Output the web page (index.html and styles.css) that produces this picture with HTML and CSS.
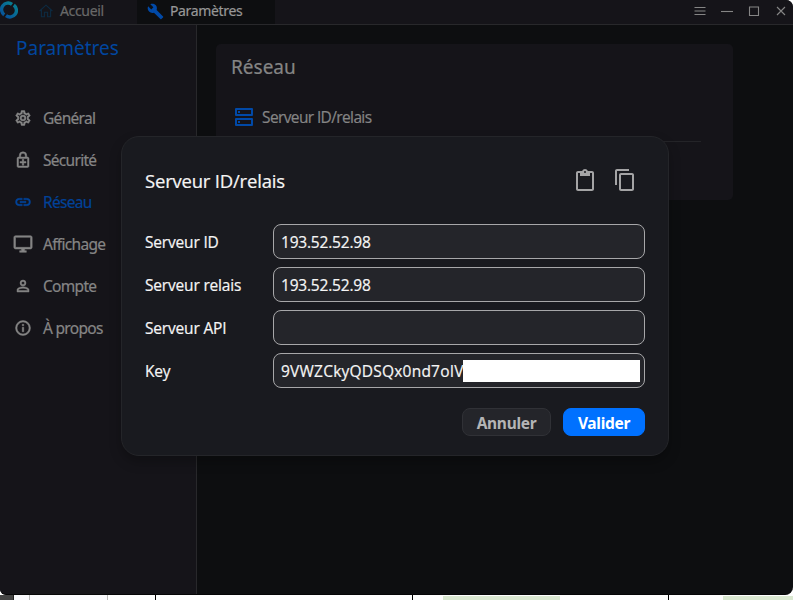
FILE: index.html
```html
<!DOCTYPE html>
<html lang="fr">
<head>
<meta charset="utf-8">
<title>Paramètres</title>
<link rel="stylesheet" href="styles.css">
</head>
<body>
<div class="window">
  <header class="titlebar">
    <svg class="logo" viewBox="0 0 18 18"><defs><linearGradient id="lg" x1="0" y1="1" x2="1" y2="0"><stop offset="0" stop-color="#075299"/><stop offset="1" stop-color="#087f91"/></linearGradient></defs><g fill="none" stroke="url(#lg)" stroke-width="3.4"><path d="M4.2 13.8A6.4 6.4 0 0 1 12 3.3"/><path d="M13.8 4.2A6.4 6.4 0 0 1 6 14.7"/></g></svg>
    <div class="tab home"><svg viewBox="0 0 14 14" fill="none" stroke="#0d2b42" stroke-width="1.1"><path d="M.6 7 7 1.2 13.4 7M2.4 5.8v7h3V8.3h3.2v4.5h3v-7"/></svg><span>Accueil</span></div>
    <div class="tab active"><svg viewBox="0 0 24 24" fill="#0149a7"><path d="m22.7 19-9.1-9.1c.9-2.3.4-5-1.5-6.9-2-2-5-2.4-7.4-1.3L9 6 6 9 1.6 4.7C.4 7.1.9 10.1 2.9 12.1c1.9 1.9 4.6 2.4 6.9 1.5l9.1 9.1c.4.4 1 .4 1.4 0l2.3-2.3c.5-.4.5-1.1.1-1.4z"/></svg><span>Paramètres</span></div>
    <div class="controls">
      <svg viewBox="0 0 12 12"><path d="M.5 2.5h11M.5 6h11M.5 9.5h11"/></svg>
      <svg viewBox="0 0 12 12"><path d="M0 6.5h12"/></svg>
      <svg viewBox="0 0 12 12"><path d="M1.5 2h9v8.5h-9z"/></svg>
      <svg viewBox="0 0 12 12"><path d="m2 2 8 8m0-8-8 8"/></svg>
    </div>
  </header>
  <div class="body">
    <nav class="sidebar">
      <h1>Paramètres</h1>
      <ul>
        <li><svg viewBox="0 0 24 24"><path fill-rule="evenodd" d="M19.43 12.98c.04-.32.07-.64.07-.98s-.03-.66-.07-.98l2.11-1.65c.19-.15.24-.42.12-.64l-2-3.46c-.12-.22-.39-.3-.61-.22l-2.49 1c-.52-.4-1.08-.73-1.69-.98l-.38-2.65C14.46 2.18 14.25 2 14 2h-4c-.25 0-.46.18-.49.42l-.38 2.65c-.61.25-1.17.59-1.69.98l-2.49-1c-.23-.09-.49 0-.61.22l-2 3.46c-.13.22-.07.49.12.64l2.11 1.65c-.04.32-.07.65-.07.98s.03.66.07.98l-2.11 1.65c-.19.15-.24.42-.12.64l2 3.46c.12.22.39.3.61.22l2.49-1c.52.4 1.08.73 1.69.98l.38 2.65c.03.24.24.42.49.42h4c.25 0 .46-.18.49-.42l.38-2.65c.61-.25 1.17-.59 1.69-.98l2.49 1c.23.09.49 0 .61-.22l2-3.46c.12-.22.07-.49-.12-.64l-2.11-1.65zm-1.98-1.71c.04.31.05.52.05.73s-.02.43-.05.73l-.14 1.13.89.7 1.08.84-.7 1.21-1.27-.51-1.04-.42-.9.68c-.43.32-.84.56-1.25.73l-1.06.43-.16 1.13-.2 1.35h-1.4l-.19-1.35-.16-1.13-1.06-.43c-.43-.18-.83-.41-1.23-.71l-.91-.7-1.06.43-1.27.51-.7-1.21 1.08-.84.89-.7-.14-1.13c-.03-.31-.05-.54-.05-.74s.02-.43.05-.73l.14-1.13-.89-.7-1.08-.84.7-1.21 1.27.51 1.04.42.9-.68c.43-.32.84-.56 1.25-.73l1.06-.43.16-1.13.2-1.35h1.39l.19 1.35.16 1.13 1.06.43c.43.18.83.41 1.23.71l.91.7 1.06-.43 1.27-.51.7 1.21-1.07.85-.89.7.14 1.13zM12 8a4 4 0 1 0 0 8 4 4 0 0 0 0-8zm0 6a2 2 0 1 1 0-4 2 2 0 0 1 0 4z"/></svg>Général</li>
        <li><svg viewBox="0 0 24 24"><path fill-rule="evenodd" d="M18 8h-1V6A5 5 0 0 0 7 6v2H6c-1.1 0-2 .9-2 2v10c0 1.1.9 2 2 2h12c1.1 0 2-.9 2-2V10c0-1.1-.9-2-2-2zM9 6a3 3 0 1 1 6 0v2H9V6zm9 14H6V10h12v10zm-7-1h2v-3h3v-2h-3v-3h-2v3H8v2h3z"/></svg>Sécurité</li>
        <li class="selected"><svg viewBox="0 0 24 24"><path d="M3.9 12c0-1.71 1.39-3.1 3.1-3.1h4V7H7a5 5 0 0 0 0 10h4v-1.9H7A3.1 3.1 0 0 1 3.9 12zM8 13h8v-2H8v2zm9-6h-4v1.9h4a3.1 3.1 0 0 1 0 6.2h-4V17h4a5 5 0 0 0 0-10z"/></svg>Réseau</li>
        <li><svg class="wide" viewBox="0 0 24 24"><path d="M21 2H3c-1.1 0-2 .9-2 2v12c0 1.1.9 2 2 2h7v2H8v2h8v-2h-2v-2h7c1.1 0 2-.9 2-2V4c0-1.1-.9-2-2-2zm0 14H3V4h18v12z"/></svg>Affichage</li>
        <li><svg viewBox="0 0 24 24"><path d="M12 5.9a2.1 2.1 0 1 1 0 4.2 2.1 2.1 0 0 1 0-4.2m0 9c2.97 0 6.1 1.46 6.1 2.1v1.1H5.9V17c0-.64 3.13-2.1 6.1-2.1M12 4a4 4 0 1 0 0 8 4 4 0 0 0 0-8zm0 9c-2.67 0-8 1.34-8 4v3h16v-3c0-2.66-5.33-4-8-4z"/></svg>Compte</li>
        <li><svg viewBox="0 0 24 24"><path d="M11 7h2v2h-2zm0 4h2v6h-2zm1-9a10 10 0 1 0 0 20 10 10 0 0 0 0-20zm0 18a8 8 0 1 1 0-16 8 8 0 0 1 0 16z"/></svg>À propos</li>
      </ul>
    </nav>
    <main>
      <section class="card">
        <h2>Réseau</h2>
        <div class="entry"><svg viewBox="0 0 18 18"><path fill="none" stroke="#0149a7" stroke-width="2" stroke-linejoin="round" d="M1 1h16v6H1zM1 11h16v6H1z"/><path fill="#0149a7" d="M3 3h2v2H3zM3 13h2v2H3z"/></svg><span>Serveur ID/relais</span></div>
        <hr>
      </section>
    </main>
  </div>
</div>
<div class="backdrop"><i class="edge"></i><i class="cell tint c1"></i><i class="cell tint c2"></i><i class="cell dark c4"></i><i class="cell dark c5"></i><i class="cell dark c6"></i><i class="green g1"></i><i class="green g2"></i></div>

<div class="dialog" role="dialog">
  <div class="dialog-head">
    <h3>Serveur ID/relais</h3>
    <svg viewBox="0 0 24 24"><path fill-rule="evenodd" d="M19 3h-4.18C14.4 1.84 13.3 1 12 1s-2.4.84-2.82 2H5c-1.1 0-2 .9-2 2v16c0 1.1.9 2 2 2h14c1.1 0 2-.9 2-2V5c0-1.1-.9-2-2-2zm-7 0a1 1 0 1 1 0 2 1 1 0 0 1 0-2zm7 18H5V5h2v3h10V5h2v16z"/></svg>
    <svg viewBox="0 0 24 24"><path d="M16 1H4c-1.1 0-2 .9-2 2v14h2V3h12V1zm3 4H8c-1.1 0-2 .9-2 2v14c0 1.1.9 2 2 2h11c1.1 0 2-.9 2-2V7c0-1.1-.9-2-2-2zm0 16H8V7h11v14z"/></svg>
  </div>
  <div class="fields">
    <label>Serveur ID</label><div class="input"><span>193.52.52.98</span></div>
    <label>Serveur relais</label><div class="input"><span>193.52.52.98</span></div>
    <label>Serveur API</label><div class="input"></div>
    <label>Key</label><div class="input"><span class="key">9VWZCkyQDSQx0nd7oIV</span><b class="mask"></b></div>
  </div>
  <div class="actions"><button class="cancel">Annuler</button><button class="ok">Valider</button></div>
</div>
</body>
</html>
```
FILE: styles.css
```css
* { box-sizing: border-box; }
body { margin: 0; width: 793px; height: 600px; overflow: hidden; position: relative; background: #fff; font: 15.5px/20px "Noto Sans", sans-serif; color: #858585; -webkit-text-stroke: .2px; }
svg { display: block; flex: none; }
h1, h2, h3 { margin: 0; font-weight: 400; white-space: nowrap; }
.window { height: 595px; display: flex; flex-direction: column; background: #0d0e10; border-radius: 0 7px 8px 6px; overflow: hidden; border-bottom: 1px solid #060607; }
.titlebar { height: 25px; flex: none; display: flex; background: #151419; border-bottom: 1px solid #28282b; }
.logo { width: 18px; height: 18px; margin-top: 1px; }
.tab { display: flex; align-items: center; height: 24px; font-size: 14px; letter-spacing: -.35px; padding-bottom: 2px; white-space: nowrap; }
.home { width: 119px; padding-left: 21px; gap: 7px; color: #686868; }
.home svg { width: 14px; height: 14px; }
.active { width: 138px; background: #0d0e10; padding-left: 10px; gap: 6px; color: #979797; }
.active svg { width: 17px; height: 17px; }
.controls { margin-left: auto; display: flex; align-items: center; gap: 15px; padding: 0 6.5px 2px 0; }
.controls svg { width: 12px; height: 12px; fill: none; stroke: #858585; stroke-width: 1.1; }
.body { flex: 1; display: flex; }
.sidebar { width: 197px; background: #151419; border-right: 1px solid #28282b; padding: 10px 0 0 14px; }
.sidebar h1 { font-size: 19px; line-height: 26px; padding-left: 2px; color: #01469f; -webkit-text-stroke: 0; }
.sidebar ul { list-style: none; margin: 36px 0 0; padding: 0; letter-spacing: -.7px; }
.sidebar li { height: 42px; display: flex; align-items: center; gap: 11px; white-space: nowrap; }
.sidebar svg { width: 18px; height: 18px; fill: #858585; stroke: #858585; stroke-width: .6; }
.sidebar .wide { width: 20px; height: 20px; margin: 0 -1px; }
.sidebar .selected { color: #014298; }
.sidebar .selected svg { fill: #014298; stroke: #014298; }
main { flex: 1; padding: 19px 60px 0 19px; }
.card { height: 156px; background: #151419; border-radius: 5px; padding: 9px 32px 0 15px; }
.card h2 { font-size: 19px; line-height: 28px; }
.entry { height: 30px; margin-top: 21px; padding-left: 4px; display: flex; align-items: center; gap: 9px; white-space: nowrap; font-family: "Open Sans", sans-serif; letter-spacing: -.62px; }
.entry svg { width: 18px; height: 18px; }
.card hr { border: 0; height: 1px; background: #242428; margin: 9px 0 0; }
.backdrop { position: relative; height: 5px; background: #fff; overflow: hidden; }
.backdrop i { position: absolute; top: 0; height: 5px; }
.edge { left: 0; width: 14px; background: #444; border-right: 1px solid #222; }
.tint { background: #fafafd; border-right: 1px solid #bbb; }
.c1 { left: 14px; width: 16px; }
.c2 { left: 30px; width: 78px; }
.dark { width: 1px; background: #000; }
.c4 { left: 155px; } .c5 { left: 412px; } .c6 { left: 668px; }
.backdrop .green { top: 1px; background: #dae8d1; }
.g1 { left: 443px; width: 117px; } .g2 { left: 723px; width: 70px; }
.dialog { position: absolute; left: 121px; top: 136px; width: 548px; height: 320px; background: #191a1f; border: 1px solid #242529; border-radius: 18px; padding: 28px 23px 0; color: #f5f5f5; box-shadow: 0 6px 12px rgba(0,0,0,.25); font-family: "Open Sans", sans-serif; }
.dialog-head { display: flex; height: 31px; align-items: center; }
.dialog-head h3 { font-size: 18.5px; line-height: 31px; flex: 1; letter-spacing: -.2px; }
.dialog-head svg { width: 24px; height: 24px; fill: #a4a4a5; margin-bottom: 1px; }
.dialog-head svg + svg { margin: 0 8px 1px 16px; }
.fields { display: grid; grid-template-columns: 128px 372px; grid-auto-rows: 35px; row-gap: 8px; align-items: center; margin-top: 28px; white-space: nowrap; letter-spacing: -.18px; }
.input { height: 35px; background: #24252a; border: 1px solid #a7a7a9; border-radius: 8px; padding: 0 4px 0 7px; display: flex; align-items: center; }
.input span { letter-spacing: -.2px; }
.mask { flex: 1; height: 22px; background: #fff; }
.input .key { width: 182px; letter-spacing: .22px; }
.actions { display: flex; justify-content: flex-end; gap: 12px; margin-top: 20px; }
button { height: 28px; padding: 1px 0 0; border-radius: 8px; font: 700 15.5px/26px "Noto Sans", sans-serif; letter-spacing: -.3px; border: 1px solid #303136; -webkit-text-stroke: 0; }
.cancel { width: 89px; background: #24252a; color: #b4b4b5; }
.ok { width: 82px; background: #0071ff; border-color: #0071ff; color: #fff; }
```
